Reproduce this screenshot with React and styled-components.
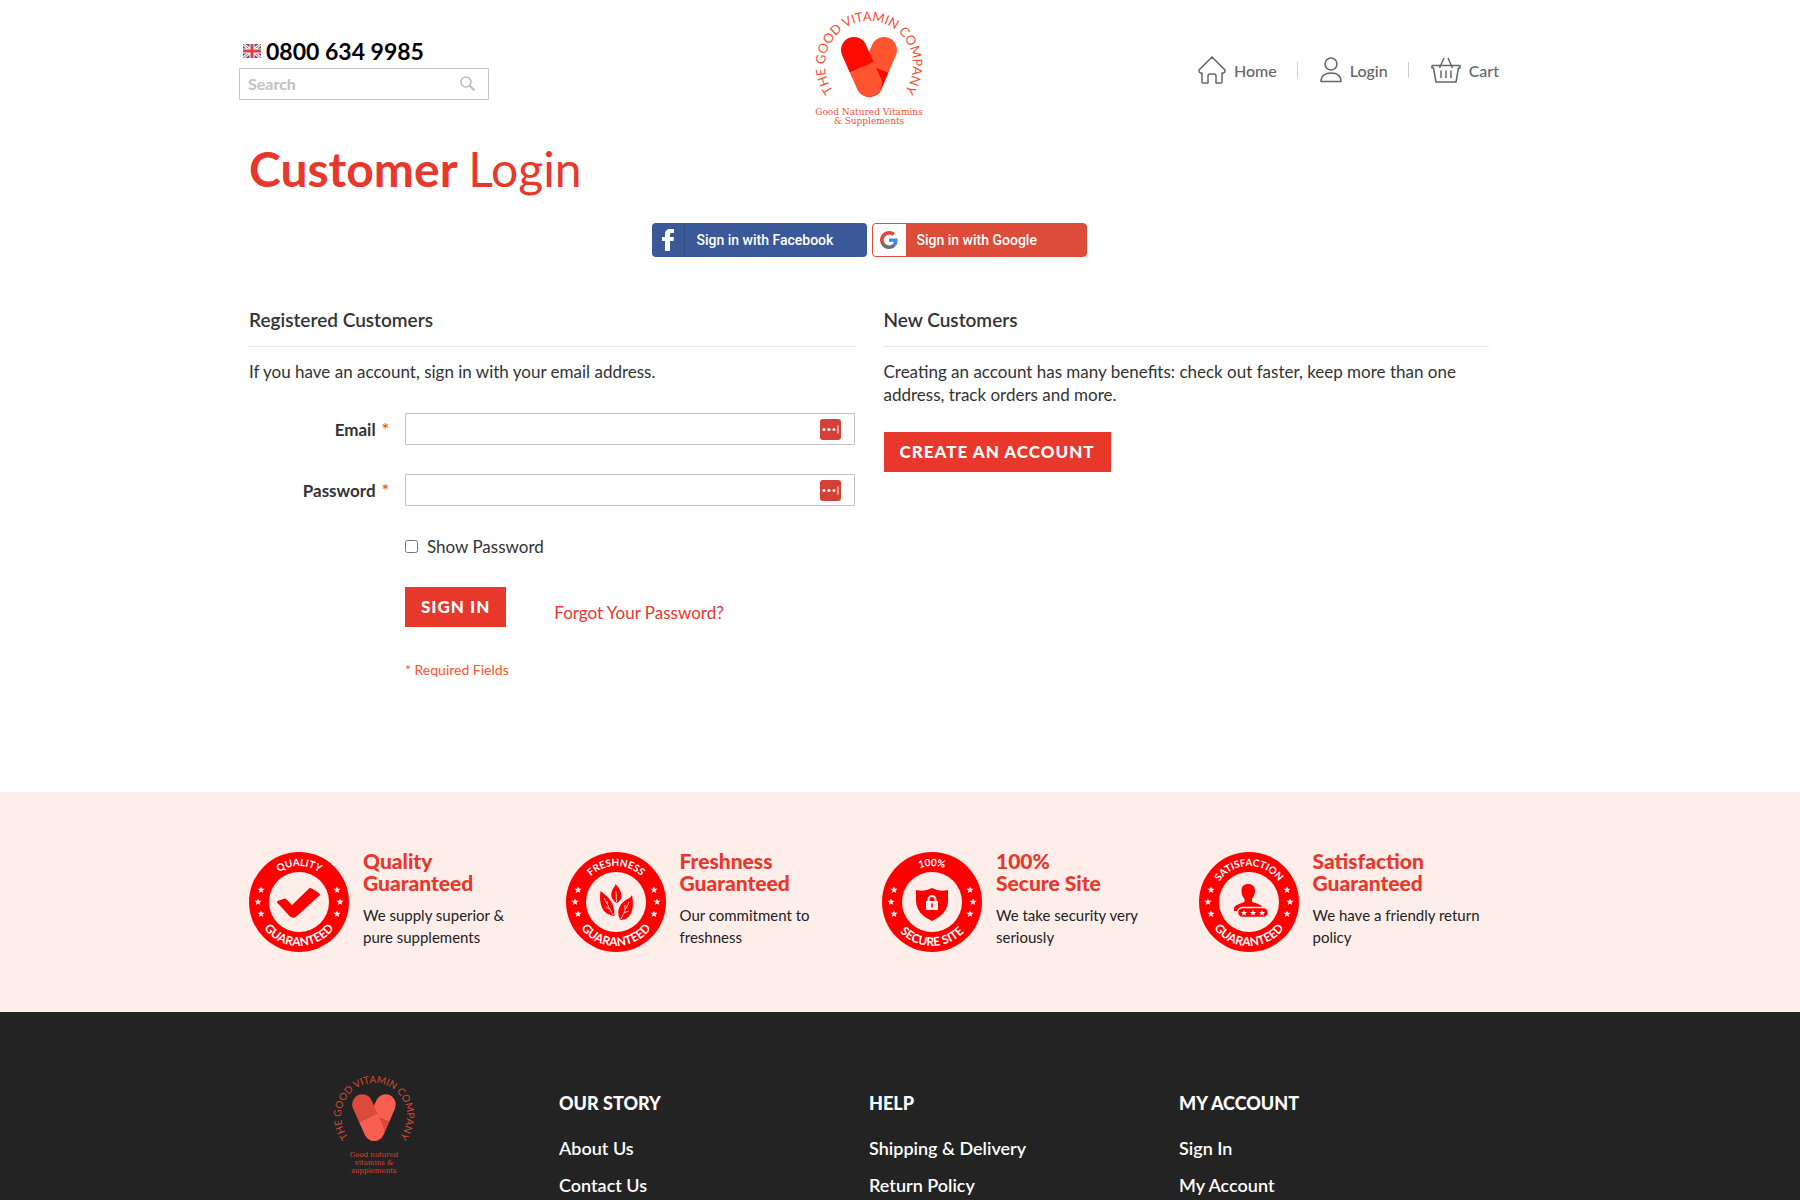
import React from "react";
import { useState } from "react";
import styled, { createGlobalStyle } from "styled-components";

const RED = "#e8372b";
const BLUSH = "#feeeea";

const guarantees = [
  {
    icon: "check",
    top: "QUALITY",
    bottom: "GUARANTEED",
    title: ["Quality", "Guaranteed"],
    text: "We supply superior & pure supplements",
  },
  {
    icon: "leaf",
    top: "FRESHNESS",
    bottom: "GUARANTEED",
    title: ["Freshness", "Guaranteed"],
    text: "Our commitment to freshness",
  },
  {
    icon: "shield",
    top: "100%",
    bottom: "SECURE SITE",
    title: ["100%", "Secure Site"],
    text: "We take security very seriously",
  },
  {
    icon: "user",
    top: "SATISFACTION",
    bottom: "GUARANTEED",
    title: ["Satisfaction", "Guaranteed"],
    text: "We have a friendly return policy",
  },
];

const footerColumns = [
  { title: "OUR STORY", links: ["About Us", "Contact Us"] },
  { title: "HELP", links: ["Shipping & Delivery", "Return Policy"] },
  { title: "MY ACCOUNT", links: ["Sign In", "My Account"] },
];

const Logo = ({ id, width, height, radius, size, ink, dark, light, tagline, tagSize, tagTop, tagStep, pill }) => {
  const cx = width / 2;
  const cy = radius + 11;
  return (
    <svg width={width} height={height} viewBox={`0 0 ${width} ${height}`} overflow="visible" role="img" aria-label="The Good Vitamin Company">
      <path
        id={id}
        fill="none"
        d={`M${cx} ${cy + radius}A${radius} ${radius} 0 0 1 ${cx} ${cy - radius}A${radius} ${radius} 0 0 1 ${cx} ${cy + radius}`}
      />
      <text fontFamily="Lato, sans-serif" fontSize={size} fill={ink} textAnchor="middle">
        <textPath href={`#${id}`} startOffset="50%">THE GOOD VITAMIN COMPANY</textPath>
      </text>
      <g transform={`translate(${cx} ${cy}) scale(${pill}) translate(-54 -55)`}>
        <g transform="translate(69 40) rotate(23)">
          <path d="M-13 19V0A13 13 0 0 1 13 0V19Z" fill={light} />
          <path d="M-13 19V37A13 13 0 0 0 13 37V19Z" fill={dark} />
        </g>
        <g transform="translate(39 40) rotate(-24)">
          <path d="M-13 19V0A13 13 0 0 1 13 0V19Z" fill={dark} />
          <path d="M-13 19V37A13 13 0 0 0 13 37V19Z" fill={light} />
        </g>
      </g>
      <g fontFamily="'DejaVu Serif', serif" fontSize={tagSize} fill={ink} textAnchor="middle">
        {tagline.map((line, i) => (
          <text key={line} x={cx} y={tagTop + i * tagStep}>{line}</text>
        ))}
      </g>
    </svg>
  );
};

const Flag = () => (
  <svg width="18" height="14" viewBox="0 0 18 14" role="img" aria-label="United Kingdom">
    <rect width="18" height="14" fill="#3b57a0" />
    <path d="M0 0L18 14M18 0L0 14" stroke="#fff" strokeWidth="3" />
    <path d="M0 0L18 14M18 0L0 14" stroke="#dd4b4b" strokeWidth="1" />
    <path d="M9 0V14M0 7H18" stroke="#fff" strokeWidth="5" />
    <path d="M9 0V14M0 7H18" stroke="#dd4040" strokeWidth="3" />
  </svg>
);

const SearchIcon = () => (
  <svg width="16" height="16" viewBox="0 0 16 16" fill="none" stroke="#bdbdbd" strokeWidth="1.6">
    <circle cx="6" cy="6" r="5" />
    <path d="M9.700 9.700L14.500 14.500" strokeWidth="2" />
  </svg>
);

const HomeIcon = () => (
  <svg width="28" height="28" viewBox="0 0 28 28" fill="none" stroke="#666" strokeWidth="1.500" strokeLinejoin="round">
    <path d="M14 1L27 14Q27.500 16 25.500 17H24V26Q24 27 23 27H18V20Q18 18 16 18H12Q10 18 10 20V27H5Q4 27 4 26V17H2.500Q0.500 16 1 14Z" />
  </svg>
);

const UserIcon = () => (
  <svg width="22" height="26" viewBox="0 0 22 26" fill="none" stroke="#666" strokeWidth="1.500" strokeLinejoin="round">
    <circle cx="11" cy="7" r="6" />
    <path d="M1 24.500C1 19 5 16 11 16S21 19 21 24.500Z" />
  </svg>
);

const CartIcon = () => (
  <svg width="30" height="26" viewBox="0 0 30 26" fill="none" stroke="#666" strokeWidth="1.500" strokeLinejoin="round">
    <path d="M1 8.500H29V11H27.500L25 25H5L2.500 11H1ZM8.500 11L13 1M21.500 11L17 1M10 13.500V21M15 13.500V21M20 13.500V21" />
  </svg>
);

const FacebookIcon = () => (
  <svg width="12" height="22" viewBox="0 0 12 22">
    <path d="M3 22V12H0V8H3V5C3 2 5 0 8 0H12V4H9.500C8 4 8 4.500 8 6V8H12L11.500 12H8V22Z" fill="#fff" />
  </svg>
);

const GoogleIcon = () => (
  <svg width="18" height="18" viewBox="0 0 18 18">
    <path fill="#4285f4" d="M17.600 9.200l-.1-1.800H9v3.400h4.800C13.600 12 13 13 12 13.600v2.200h3a8.800 8.800 0 0 0 2.600-6.600z" />
    <path fill="#6d7268" d="M9 18c2.400 0 4.500-.8 6-2.200l-3-2.200a5.400 5.400 0 0 1-8-2.900H1V13a9 9 0 0 0 8 5z" />
    <path fill="#ea4335" d="M4 10.700a5.400 5.400 0 0 1 0-3.400V5H1a9 9 0 0 0 0 8l3-2.300z" />
    <path fill="#ea4335" d="M9 3.600c1.300 0 2.500.4 3.400 1.300L15 2.300A9 9 0 0 0 1 5l3 2.400a5.400 5.400 0 0 1 5-3.700z" />
  </svg>
);

const FillIcon = () => (
  <svg width="21" height="21" viewBox="0 0 21 21">
    <rect width="21" height="21" rx="3" fill="#d44137" />
    <g fill="#fff">
      <circle cx="4" cy="10.500" r="1.500" />
      <circle cx="9" cy="10.500" r="1.500" />
      <circle cx="14" cy="10.500" r="1.500" />
      <path d="M17.500 6.500H18.500V14.500H17.500Z" />
    </g>
  </svg>
);

const star = "M0 -4L1 -1.300H4L1.600 .5L2.500 3.400L0 1.700L-2.500 3.400L-1.600 .5L-4 -1.300H-1Z";

const badgeArt = {
  check: (
    <path d="M29 50L36 47.500L43 54.500L61 37Q64 38 70 42.500L47 63.500Q44 66 41 63Z" fill="#f00" stroke="#f00" strokeWidth="2" strokeLinejoin="round" />
  ),
  leaf: (
    <g fill="#f00">
      <path d="M49.500 32C54 37 56 41 55.500 45C55 48 53 50 50.500 51C46 48 44 44 46 39C47 36 49 35 49.500 32Z" />
      <path d="M34.500 39C42 45 49 50 48.500 64C40 63 32 57 34.500 39Z" />
      <path d="M66 43C69 57 65 68 54.500 68C49 58 55 50 62 47Q65 45.500 66 43Z" />
      <path d="M50 39L50.500 50M38 46L47 63M41.500 53L41 49M44 57L39.500 55M63 50L55 67M59 58V53M58 61L62.500 59" stroke={BLUSH} strokeWidth=".8" fill="none" />
    </g>
  ),
  shield: (
    <g>
      <path d="M34 38Q43 40 50 36Q57 40 66 38V49C66 58 59 65 50 69C41 65 34 58 34 49Z" fill="#f00" />
      <path d="M46.500 49V47.500A3.500 3.500 0 0 1 53.500 47.500V49" stroke={BLUSH} strokeWidth="2" fill="none" />
      <rect x="44" y="49" width="12" height="9" fill={BLUSH} />
      <path d="M50 51.500V55.500" stroke="#f00" strokeWidth="1.500" />
    </g>
  ),
  user: (
    <g fill="#f00">
      <path d="M42.500 39C42.500 34 45 32 49 32S56 34 56 39C56 43 54 45 53 47V50C59 52 64 52 64 59H35C34 53 40 52 45.500 50V47C44 45 42.500 43 42.500 39Z" />
      <rect x="38.500" y="55.500" width="31" height="10" rx="5" stroke={BLUSH} strokeWidth="1.500" />
      {[45, 54, 63].map((x) => (
        <path key={x} d={star} transform={`translate(${x} 61) scale(.8)`} fill="#fff" />
      ))}
    </g>
  ),
};

const starSpots = [[12, 38], [9, 50], [12, 62], [88, 38], [91, 50], [88, 62]];

const Badge = ({ icon, top, bottom }) => (
  <svg width="100" height="100" viewBox="0 0 100 100" role="img" aria-label={`${top} ${bottom}`}>
    <circle cx="50" cy="50" r="50" fill="#f00" />
    <circle cx="50" cy="50" r="30" fill={BLUSH} />
    <path id={`${icon}-top`} d="M50 86A36 36 0 0 1 50 14A36 36 0 0 1 50 86" fill="none" />
    <path id={`${icon}-bottom`} d="M50 6A44 44 0 0 0 50 94A44 44 0 0 0 50 6" fill="none" />
    <g fontFamily="Lato, sans-serif" fontWeight="700" fill="#fff" textAnchor="middle">
      <text fontSize="10">
        <textPath href={`#${icon}-top`} startOffset="50%">{top}</textPath>
      </text>
      <text fontSize="12">
        <textPath href={`#${icon}-bottom`} startOffset="50%">{bottom}</textPath>
      </text>
    </g>
    {starSpots.map(([x, y]) => (
      <path key={`${x}-${y}`} d={star} transform={`translate(${x} ${y}) scale(.9)`} fill="#fff" />
    ))}
    {badgeArt[icon]}
  </svg>
);

const App = () => {
  const [showPassword, setShowPassword] = useState(false);

  return (
    <Page>
      <GlobalStyle />
      <Frame>
        <Header>
          <Contact>
            <Phone href="tel:08006349985">
              <Flag />
              0800 634 9985
            </Phone>
            <SearchBox>
              <input type="search" placeholder="Search" aria-label="Search" />
              <button type="button" aria-label="Search">
                <SearchIcon />
              </button>
            </SearchBox>
          </Contact>
          <a href="#home">
            <Logo
              id="logo-ring"
              width={108}
              height={118}
              radius={44}
              size={13}
              pill={1}
              ink="#f4523a"
              dark="#ff0a00"
              light="#ff5430"
              tagline={["Good Natured Vitamins", "& Supplements"]}
              tagSize={9}
              tagTop={105}
              tagStep={9}
            />
          </a>
          <Nav>
            <a href="#home"><HomeIcon />Home</a>
            <a href="#login"><UserIcon />Login</a>
            <a href="#cart"><CartIcon />Cart</a>
          </Nav>
        </Header>
        <Main>
          <Title>Customer <span>Login</span></Title>
          <Social>
            <FacebookButton type="button">
              <i><FacebookIcon /></i>
              Sign in with Facebook
            </FacebookButton>
            <GoogleButton type="button">
              <i><GoogleIcon /></i>
              Sign in with Google
            </GoogleButton>
          </Social>
          <Columns>
            <section>
              <BlockTitle>Registered Customers</BlockTitle>
              <p>If you have an account, sign in with your email address.</p>
              <Form onSubmit={(e) => e.preventDefault()}>
                <label htmlFor="email">Email <em>*</em></label>
                <Field>
                  <input id="email" type="email" />
                  <FillIcon />
                </Field>
                <label htmlFor="password">Password <em>*</em></label>
                <Field>
                  <input id="password" type={showPassword ? "text" : "password"} />
                  <FillIcon />
                </Field>
                <ShowPassword>
                  <input
                    id="show"
                    type="checkbox"
                    checked={showPassword}
                    onChange={() => setShowPassword(!showPassword)}
                  />
                  <label htmlFor="show">Show Password</label>
                </ShowPassword>
                <Actions>
                  <RedButton type="submit">Sign In</RedButton>
                  <a href="#forgot">Forgot Your Password?</a>
                </Actions>
                <Required>* Required Fields</Required>
              </Form>
            </section>
            <section>
              <BlockTitle>New Customers</BlockTitle>
              <p>Creating an account has many benefits: check out faster, keep more than one address, track orders and more.</p>
              <RedButton as="a" href="#create">Create an Account</RedButton>
            </section>
          </Columns>
        </Main>
      </Frame>
      <Band>
        <Frame>
          <Guarantees>
            {guarantees.map((item) => (
              <Guarantee key={item.icon}>
                <Badge icon={item.icon} top={item.top} bottom={item.bottom} />
                <div>
                  <h3>{item.title[0]}<br />{item.title[1]}</h3>
                  <p>{item.text}</p>
                </div>
              </Guarantee>
            ))}
          </Guarantees>
        </Frame>
      </Band>
      <Footer>
        <Frame>
          <FooterGrid>
            <FooterLogo href="#home">
              <Logo
                id="footer-ring"
                width={84}
                height={104}
                radius={33}
                size={10}
                pill={0.78}
                ink="#d44a36"
                dark="#dc4a3c"
                light="#f76050"
                tagline={["Good natured", "vitamins &", "supplements"]}
                tagSize={7}
                tagTop={85}
                tagStep={8}
              />
            </FooterLogo>
            {footerColumns.map((column) => (
              <FooterColumn key={column.title}>
                <h4>{column.title}</h4>
                {column.links.map((link) => (
                  <a key={link} href="#footer">{link}</a>
                ))}
              </FooterColumn>
            ))}
          </FooterGrid>
        </Frame>
      </Footer>
    </Page>
  );
};

const GlobalStyle = createGlobalStyle`
  * {
    box-sizing: border-box;
  }
  body {
    margin: 0;
    background: #fff;
    color: #333;
    font: 400 17px/23px Lato, sans-serif;
  }
  h1, h2, h3, h4, p {
    margin: 0;
  }
  a {
    color: inherit;
    text-decoration: none;
  }
  svg {
    display: block;
    flex-shrink: 0;
  }
  input, button {
    font: inherit;
  }
`;

const Page = styled.div`
  display: flex;
  flex-direction: column;
  min-height: 100vh;
`;

/* the content sits a little left of the window's middle */
const Frame = styled.div`
  padding-right: 62px;
  > * {
    max-width: 1260px;
    margin: 0 auto;
  }
`;

const Header = styled.header`
  display: grid;
  grid-template-columns: 1fr auto 1fr;
  padding-top: 10px;
`;

const Contact = styled.div`
  width: 250px;
  padding-top: 26px;
`;

const Phone = styled.a`
  display: flex;
  align-items: center;
  gap: 5px;
  margin-bottom: 2px;
  padding-left: 4px;
  color: #000;
  font-size: 23px;
  font-weight: 700;
  line-height: 30px;
`;

const SearchBox = styled.div`
  display: flex;
  align-items: center;
  height: 32px;
  padding: 0 12px 0 8px;
  border: 1px solid #c2c2c2;
  border-radius: 1px;
  input {
    flex: 1;
    min-width: 0;
    border: 0;
    padding: 0 0 2px;
    outline: none;
    font-size: 16px;
    font-weight: 700;
    &::placeholder {
      color: #c2c2c2;
    }
  }
  button {
    border: 0;
    padding: 0;
    background: none;
  }
`;

const Nav = styled.nav`
  display: flex;
  justify-content: flex-end;
  align-items: center;
  height: 120px;
  color: #666;
  font-size: 16px;
  font-weight: 500;
  a {
    display: flex;
    align-items: center;
    gap: 8px;
  }
  a + a::before {
    content: "";
    height: 16px;
    margin: 0 14px 0 20px;
    border-left: 1px solid #ccc;
  }
`;

const Main = styled.main`
  padding: 14px 10px 112px;
`;

const Title = styled.h1`
  color: ${RED};
  font-size: 48px;
  font-weight: 700;
  line-height: 50px;
  span {
    font-weight: 400;
  }
`;

const Social = styled.div`
  display: flex;
  justify-content: center;
  gap: 5px;
  margin-top: 29px;
`;

const SocialButton = styled.button`
  display: flex;
  align-items: center;
  width: 215px;
  height: 34px;
  padding: 0;
  border: 0;
  border-radius: 4px;
  color: #fff;
  font: 500 14px/20px Roboto, sans-serif;
  i {
    display: flex;
    align-items: center;
    justify-content: center;
    width: 33px;
    height: 100%;
  }
`;

const FacebookButton = styled(SocialButton)`
  background: #3b5998;
  i {
    margin-right: 12px;
    border-right: 1px dotted #2b4170;
  }
`;

const GoogleButton = styled(SocialButton)`
  border: 1px solid #dd4b39;
  background: #dd4b39;
  i {
    margin-right: 11px;
    border-radius: 3px 0 0 3px;
    background: #fff;
  }
`;

const Columns = styled.div`
  display: grid;
  grid-template-columns: 1fr 1fr;
  gap: 29px;
  margin-top: 49px;
`;

const BlockTitle = styled.h2`
  margin-bottom: 13px;
  padding-bottom: 13px;
  border-bottom: 1px solid #e4e4e4;
  font-size: 19px;
  font-weight: 600;
  line-height: 27px;
`;

const Form = styled.form`
  display: grid;
  grid-template-columns: 140px 1fr;
  column-gap: 16px;
  row-gap: 29px;
  align-items: center;
  margin-top: 30px;
  > label {
    text-align: right;
    font-weight: 700;
  }
  em {
    color: #ff5430;
    font-style: normal;
    margin-left: 2px;
  }
`;

const Field = styled.div`
  display: flex;
  align-items: center;
  height: 32px;
  padding: 0 13px 0 8px;
  border: 1px solid #c2c2c2;
  border-radius: 1px;
  input {
    flex: 1;
    min-width: 0;
    padding: 0;
    border: 0;
    outline: none;
  }
`;

const ShowPassword = styled.div`
  grid-column: 2;
  display: flex;
  align-items: center;
  gap: 9px;
  input {
    width: 13px;
    height: 13px;
    margin: 0;
  }
`;

const Actions = styled.div`
  grid-column: 2;
  display: flex;
  gap: 48px;
  a {
    padding-top: 14px;
    color: ${RED};
  }
`;

const Required = styled.div`
  grid-column: 2;
  margin-top: 4px;
  color: #ff5430;
  font-size: 14px;
  line-height: 20px;
`;

const RedButton = styled.button`
  display: inline-block;
  padding: 8px 16px;
  border: 0;
  background: ${RED};
  color: #fff;
  font-size: 17px;
  font-weight: 900;
  line-height: 24px;
  letter-spacing: 1px;
  text-transform: uppercase;
  p + & {
    margin-top: 26px;
  }
`;

const Band = styled.section`
  padding: 58px 0;
  background: ${BLUSH};
`;

const Guarantees = styled.div`
  display: grid;
  grid-template-columns: repeat(4, 1fr);
  gap: 16px;
  padding-left: 10px;
`;

const Guarantee = styled.article`
  display: flex;
  gap: 14px;
  padding-right: 15px;
  svg {
    margin: 2px 0;
  }
  h3 {
    color: ${RED};
    font-size: 21px;
    font-weight: 900;
    line-height: 22px;
  }
  p {
    margin-top: 10px;
    color: #222;
    font-size: 15px;
    line-height: 22px;
  }
`;

const Footer = styled.footer`
  flex: 1;
  background: #232323;
  color: #fff;
`;

const FooterGrid = styled.div`
  display: grid;
  grid-template-columns: 320px repeat(3, 310px);
  padding-top: 60px;
`;

const FooterLogo = styled.a`
  justify-self: start;
  margin-left: 93px;
`;

const FooterColumn = styled.div`
  display: flex;
  flex-direction: column;
  gap: 15px;
  padding-top: 20px;
  font-size: 18px;
  line-height: 22px;
  font-weight: 600;
  h4 {
    margin-bottom: 8px;
    font-size: 18px;
    font-weight: 900;
  }
`;

export default App;
